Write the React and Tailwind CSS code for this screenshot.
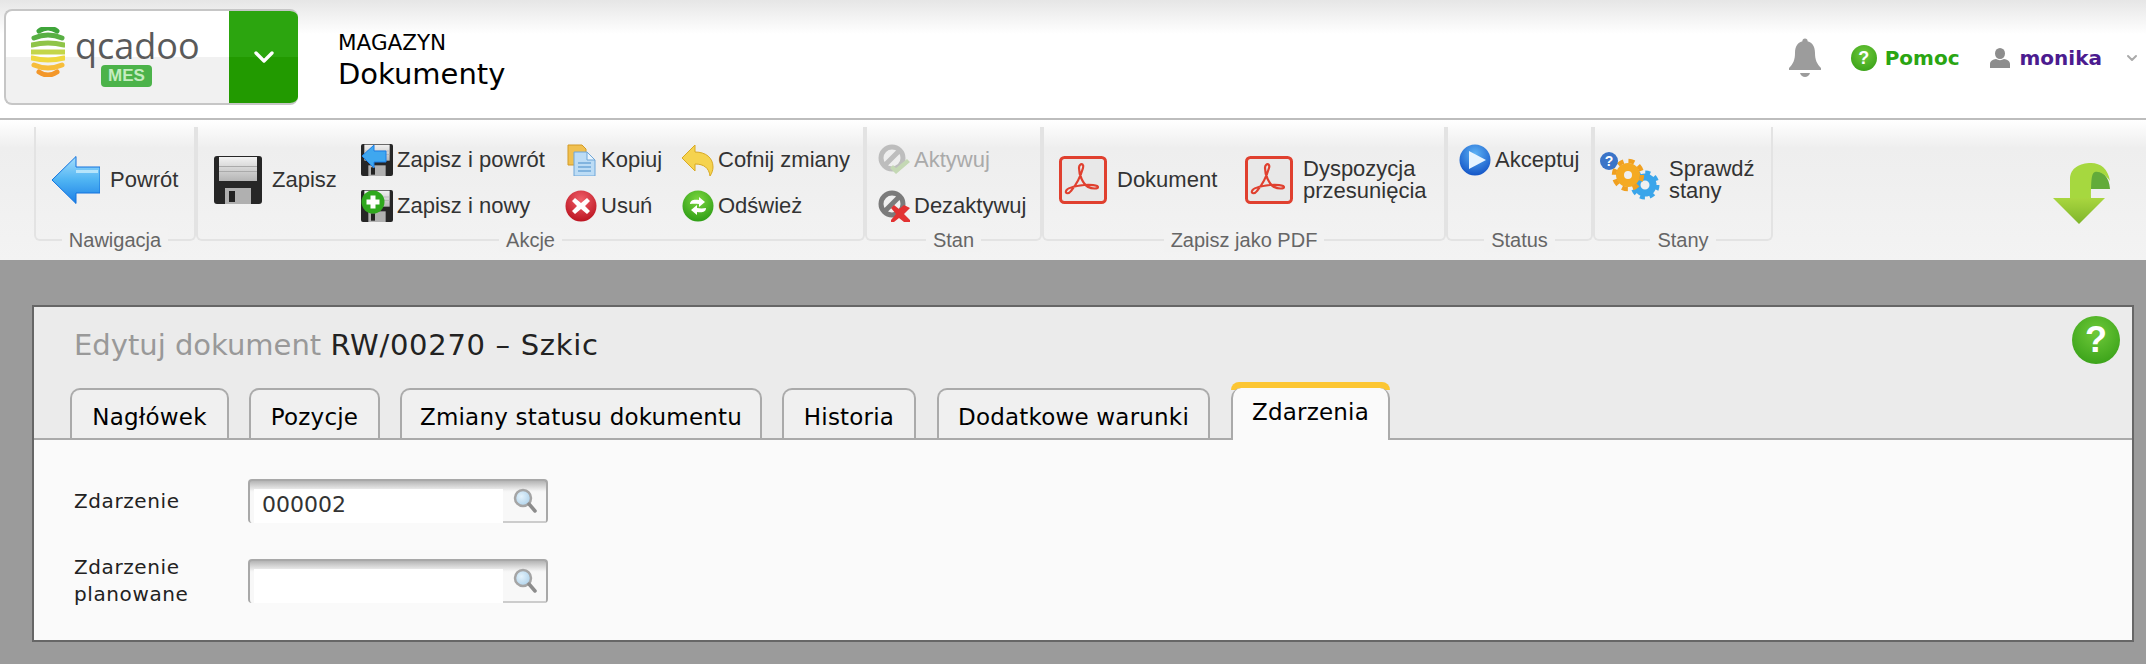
import React from 'react';
import { ChevronDown } from 'lucide-react';

const LOGO_BANDS = [
    { y: 4, bend: -3, w: 18, color: '#3fa53a' },
    { y: 11, bend: -3, w: 28, color: '#58af43' },
    { y: 18, bend: -2, w: 32, color: '#8fc448' },
    { y: 25, bend: 0, w: 33, color: '#c3d64a' },
    { y: 31, bend: 2, w: 32, color: '#efd83f' },
    { y: 38, bend: 3, w: 28, color: '#f7bd3a' },
    { y: 45, bend: 3, w: 18, color: '#f3972a' },
];

const LogoMark = () => (
    <svg width="34" height="50" viewBox="0 0 34 50">
        {LOGO_BANDS.map((b) => (
            <path
                key={b.y}
                d={`M${17 - b.w / 2} ${b.y} Q17 ${b.y + b.bend * 2} ${17 + b.w / 2} ${b.y}`}
                fill="none"
                stroke={b.color}
                strokeWidth="5"
                strokeLinecap="round"
            />
        ))}
    </svg>
);

const Bell = () => (
    <svg width="32" height="40" viewBox="0 0 32 40" fill="#9c9c9c">
        <circle cx="16" cy="3" r="2.6" />
        <path d="M16 3c-7 0-10 5-10 12 0 7-2 11-6 15v2h32v-2c-4-4-6-8-6-15 0-7-3-12-10-12z" />
        <path d="M11 35h10c-.8 2.600-2.800 4-5 4s-4.200-1.400-5-4z" />
    </svg>
);

const UserIcon = () => (
    <svg width="20" height="20" viewBox="0 0 20 20" fill="#8d8d8d">
        <ellipse cx="10" cy="5.500" rx="5" ry="5.500" />
        <path d="M0 20v-4c0-3 3-4.500 6-5 2.500 1.500 5.500 1.500 8 0 3 .5 6 2 6 5v4z" />
    </svg>
);

const ArrowBack = () => (
    <svg width="48" height="48" viewBox="0 0 48 48">
        <defs>
            <linearGradient id="arrowBack" x1="0" y1="0" x2="0" y2="1">
                <stop offset="0" stopColor="#a5defc" />
                <stop offset="0.5" stopColor="#4fb4f3" />
                <stop offset="1" stopColor="#1c7fe6" />
            </linearGradient>
        </defs>
        <path d="M0 24 24 .5v10.500h24v26H24v10.500z" fill="url(#arrowBack)" stroke="#1273de" strokeWidth="1" />
        <rect x="24" y="14" width="22" height="3" fill="#c8ecfd" opacity="0.8" />
    </svg>
);

const Floppy = ({ size = 48 }) => (
    <svg width={size} height={size} viewBox="0 0 48 48">
        <defs>
            <linearGradient id="floppyLabel" x1="0" y1="0" x2="0" y2="1">
                <stop offset="0" stopColor="#f2f2f2" />
                <stop offset="1" stopColor="#b5b5b5" />
            </linearGradient>
        </defs>
        <rect width="48" height="48" rx="3" fill="#262626" />
        <rect x="5" y="1" width="38" height="24" fill="url(#floppyLabel)" />
        <rect x="5" y="10" width="38" height="1" fill="#aaa" />
        <rect x="5" y="15" width="38" height="1" fill="#aaa" />
        <rect x="11" y="32" width="26" height="16" fill="#b0b0b0" />
        <rect x="15" y="35" width="6" height="11" fill="#222" />
    </svg>
);

const FloppyBack = () => (
    <div className="relative w-8 h-8 shrink-0 overflow-hidden">
        <Floppy size={32} />
        <svg className="absolute left-0 top-0" width="26" height="24" viewBox="0 0 26 24">
            <path d="M1 12 13 1v6h12v11H13v6z" fill="#3fa7ef" stroke="#1c7fe6" />
        </svg>
    </div>
);

const FloppyNew = () => (
    <div className="relative w-8 h-8 shrink-0 overflow-hidden">
        <Floppy size={32} />
        <svg className="absolute left-0 top-0" width="24" height="24" viewBox="0 0 24 24">
            <circle cx="12" cy="12" r="11.500" fill="#2fa81e" />
            <path d="M9.500 5.500h5v4h4v5h-4v4h-5v-4h-4v-5h4z" fill="#fff" />
        </svg>
    </div>
);

const CopyIcon = () => (
    <svg width="32" height="32" viewBox="0 0 32 32" className="shrink-0">
        <path d="M3 1h14l4 4v16H3z" fill="#f0c050" stroke="#d39a25" />
        <path d="M9 8h13l8 8v16H9z" fill="#bcdcf5" stroke="#6ea6d8" />
        <path d="M22 8v8h8z" fill="#e8f4fd" stroke="#6ea6d8" />
        <path d="M13 19h13M13 23h13M13 27h13" stroke="#6ea6d8" strokeWidth="1.500" />
    </svg>
);

const UndoIcon = () => (
    <svg width="32" height="32" viewBox="0 0 32 32" className="shrink-0">
        <path d="M0 14 13 1v7c11 0 18 6 18 15 0 3-1 6-3 9-1-8-6-12-15-12v7z" fill="#f5d34f" stroke="#d8a925" strokeLinejoin="round" />
    </svg>
);

const RedCross = () => (
    <svg width="32" height="32" viewBox="0 0 32 32" className="shrink-0">
        <defs>
            <radialGradient id="redBall" cx="0.5" cy="0.3" r="0.75">
                <stop offset="0" stopColor="#f0606a" />
                <stop offset="1" stopColor="#b80f1c" />
            </radialGradient>
        </defs>
        <circle cx="16" cy="16" r="15.500" fill="url(#redBall)" />
        <path d="M10 8l6 5 6-5 3 3-5 5 5 5-3 3-6-5-6 5-3-3 5-5-5-5z" fill="#fff" />
    </svg>
);

const RefreshIcon = () => (
    <svg width="32" height="32" viewBox="0 0 32 32" className="shrink-0">
        <defs>
            <radialGradient id="greenBall" cx="0.5" cy="0.3" r="0.75">
                <stop offset="0" stopColor="#7bd63f" />
                <stop offset="1" stopColor="#2a9a14" />
            </radialGradient>
        </defs>
        <circle cx="16" cy="16" r="15.500" fill="url(#greenBall)" />
        <path d="M8 14c0-4 4-5 9-4V7l6 5-6 5v-3c-3-.5-6-.5-9 0z" fill="#fff" />
        <path d="M24 18c0 4-4 5-9 4v3l-6-5 6-5v3c3 .5 6 .5 9 0z" fill="#fff" />
    </svg>
);

const ActivateIcon = () => (
    <svg width="32" height="32" viewBox="0 0 32 32" className="shrink-0">
        <circle cx="14" cy="14" r="11" fill="none" stroke="#bdbdbd" strokeWidth="5" />
        <path d="M6 22 22 6" stroke="#bdbdbd" strokeWidth="5" />
        <path d="M12 24l6 6 14-12-3-3-11 9-3-3z" fill="#c4d8b4" />
    </svg>
);

const DeactivateIcon = () => (
    <svg width="32" height="32" viewBox="0 0 32 32" className="shrink-0">
        <circle cx="14" cy="14" r="11" fill="none" stroke="#7b7b7b" strokeWidth="5" />
        <path d="M6 22 22 6" stroke="#7b7b7b" strokeWidth="5" />
        <path d="M13 18l3-3 5 4 5-4 6 3-6 6 6 6v2h-6l-5-4-5 4h-3v-2l5-6z" fill="#e23232" />
    </svg>
);

const PdfIcon = () => (
    <svg width="48" height="48" viewBox="0 0 48 48" className="shrink-0">
        <rect x="1.500" y="1.500" width="45" height="45" rx="4" fill="#e8e8e8" stroke="#e0402f" strokeWidth="3" />
        <path
            d="M21 9c2-2 4 0 3 3-2 7-7 17-12 23-2 3-6 3-5 0 1-3 9-5 18-6 6-.5 14 0 14 2s-6 2-10 0c-5-3-9-12-9-19 0-1 0-2 1-3z"
            fill="none"
            stroke="#e0402f"
            strokeWidth="2.200"
        />
    </svg>
);

const PlayIcon = () => (
    <svg width="32" height="32" viewBox="0 0 32 32" className="shrink-0">
        <defs>
            <radialGradient id="blueBall" cx="0.5" cy="0.3" r="0.75">
                <stop offset="0" stopColor="#5cb2f5" />
                <stop offset="1" stopColor="#0f4fc4" />
            </radialGradient>
        </defs>
        <circle cx="16" cy="16" r="15.500" fill="url(#blueBall)" />
        <path d="M10 7l17 9-17 9z" fill="#e6f4ff" />
    </svg>
);

const GearsIcon = () => (
    <svg width="60" height="48" viewBox="0 0 60 48" className="shrink-0">
        <circle cx="45" cy="33" r="8" fill="none" stroke="#3aa5ea" strokeWidth="7" />
        <circle cx="45" cy="33" r="12.500" fill="none" stroke="#3aa5ea" strokeWidth="4" strokeDasharray="5 4.800" />
        <circle cx="28" cy="23" r="8" fill="none" stroke="#f5aa22" strokeWidth="8" />
        <circle cx="28" cy="23" r="14" fill="none" stroke="#f0a020" strokeWidth="4.500" strokeDasharray="6 5" />
        <circle cx="9" cy="9" r="9" fill="#3a74c8" />
        <text x="9" y="14" textAnchor="middle" fontSize="14" fontWeight="700" fill="#fff" fontFamily="Liberation Sans, sans-serif">?</text>
    </svg>
);

const FoldArrow = () => (
    <svg width="57" height="61" viewBox="0 0 57 61">
        <defs>
            <linearGradient id="foldHead" x1="0" y1="0" x2="0" y2="1">
                <stop offset="0" stopColor="#a9d63f" />
                <stop offset="1" stopColor="#7fb52b" />
            </linearGradient>
        </defs>
        <path d="M38 8C48 6 56 12 57 26H38z" fill="#62ab3a" />
        <path d="M17 35V16C17 5 27 0 38 0 48 0 55 6 57 18 52 11 46 8 42 9 39 10 38 14 38 35z" fill="#a6d83f" />
        <path d="M0 35h52L26 61z" fill="url(#foldHead)" />
    </svg>
);

const SearchIcon = () => (
    <svg width="24" height="26" viewBox="0 0 24 26">
        <defs>
            <radialGradient id="lens" cx="0.4" cy="0.4" r="0.7">
                <stop offset="0" stopColor="#e4f2fb" />
                <stop offset="1" stopColor="#a9cfe9" />
            </radialGradient>
        </defs>
        <circle cx="10" cy="10" r="8" fill="url(#lens)" stroke="#a5a5a5" strokeWidth="2.500" />
        <path d="M16 16l6 7" stroke="#8c8c8c" strokeWidth="3.500" strokeLinecap="round" />
    </svg>
);

const HelpBall = ({ className, textClass }) => (
    <div className={`rounded-full flex items-center justify-center bg-[radial-gradient(circle_at_50%_35%,#6fc93a,#2f9a12)] text-white font-bold font-['Liberation_Sans',sans-serif] ${className}`}>
        <span className={textClass}>?</span>
    </div>
);

const Group = ({ label, className, children }) => (
    <div className={`flex flex-col justify-between h-[114px] border-x-2 border-b-2 border-[#e3e3e3] rounded-b-md ${className}`}>
        <div className="flex pt-[17px]">{children}</div>
        <div className="flex justify-center -mb-[13px]">
            <span className="bg-[#f2f2f2] px-[7px] text-[20px] leading-6 text-[#666]">{label}</span>
        </div>
    </div>
);

const SmallBtn = ({ icon, label, disabled }) => (
    <div className={`flex items-center gap-1 h-8 whitespace-nowrap ${disabled ? 'text-[#aaa]' : 'text-[#333]'}`}>
        {icon}
        <span>{label}</span>
    </div>
);

const Tab = ({ label, active, className }) =>
    active ? (
        <div className={`flex flex-col h-[58px] -mb-[2px] ${className}`}>
            <div className="h-[8px] -mb-[2px] rounded-t-[10px] bg-[#fcc633]" />
            <div className="flex-1 flex justify-center pt-[8px] rounded-t-[10px] border-x-2 border-[#aaa] bg-[#fafafa] text-[23px] tracking-[0.2px] leading-8 text-black">
                {label}
            </div>
        </div>
    ) : (
        <div className={`flex justify-center items-center h-[50px] pt-[6px] rounded-t-[10px] border-x-2 border-t-2 border-[#aaa] bg-[#f0f0f0] text-[23px] tracking-[0.2px] text-black ${className}`}>
            {label}
        </div>
    );

const LookupField = ({ label, value }) => (
    <div className="flex items-center">
        <div className="w-[174px] text-[20px] leading-[27px] tracking-[0.6px] text-[#222]">{label}</div>
        <div className="flex w-[300px] h-11 rounded border-2 border-b-0 border-[#a8a8a8] bg-[linear-gradient(#b5b5b5,#f5f5f5_10px,#f8f8f8_12px)]">
            <div className="flex-1 mt-[8px] ml-[4px] bg-[#fff]">
                <input
                    readOnly
                    value={value}
                    className="w-full h-full pl-[8px] pb-[3px] text-[22px] text-[#333] font-['DejaVu_Sans',sans-serif] outline-none bg-transparent"
                />
            </div>
            <div className="w-[43px] flex items-center justify-center border-b-2 border-[#ccc]">
                <SearchIcon />
            </div>
        </div>
    </div>
);

export default function App() {
    return (
        <div className="h-[664px] w-full overflow-hidden bg-[#9b9b9b] font-['DejaVu_Sans',sans-serif]">
            {/* header */}
            <header className="flex items-center h-[120px] pb-[2px] pl-1 pr-[6px] border-b-2 border-[#bdbdbd] bg-[linear-gradient(#e6e6e6,#ffffff_34px)]">
                <div className="flex w-[294px] h-[96px] -mt-[2px] rounded-lg overflow-hidden border-2 border-r-0 border-[#c6c6c6] bg-[linear-gradient(#ffffff_50%,#f1f1f1_50%)]">
                    <div className="flex-1 flex pl-[25px] pt-[16px] gap-[10px]">
                        <LogoMark />
                        <div className="flex flex-col">
                            <span className="font-['Open_Sans',sans-serif] text-[36px] leading-[38px] text-[#5a5a5a]">qcadoo</span>
                            <span className="self-start ml-[26px] px-[7px] h-[22px] rounded-sm bg-[#4cb34a] text-[#c5ecc0] text-[17px] leading-[22px] font-bold font-['Liberation_Sans',sans-serif]">MES</span>
                        </div>
                    </div>
                    <div className="w-[69px] flex items-center justify-center bg-[linear-gradient(#2ca50f_50%,#229a00_50%)]">
                        <ChevronDown className="w-8 h-8 text-white" strokeWidth={2.500} />
                    </div>
                </div>
                <div className="ml-[40px] mt-[6px] text-black">
                    <div className="text-[21.5px] leading-[26px]">MAGAZYN</div>
                    <div className="text-[29px] leading-[36px]">Dokumenty</div>
                </div>
                <div className="ml-auto flex items-center">
                    <Bell />
                    <HelpBall className="ml-[30px] w-[26px] h-[26px]" textClass="text-[18px]" />
                    <span className="ml-2 text-[20px] font-bold text-[#2aa512]">Pomoc</span>
                    <div className="ml-[30px]"><UserIcon /></div>
                    <span className="ml-[10px] text-[20px] font-bold text-[#4b1b8f]">monika</span>
                    <ChevronDown className="ml-[22px] w-4 h-4 text-[#aaa]" strokeWidth={3} />
                </div>
            </header>

            {/* toolbar */}
            <div className="flex h-[140px] pt-[7px] pl-[34px] bg-[linear-gradient(#ffffff,#eeeeee_28px,#f3f3f3)] text-[22px] leading-6 text-[#333] font-['Liberation_Sans',Arial,sans-serif]">
                <Group label="Nawigacja" className="w-[162px]">
                    <div className="flex items-center gap-[10px] h-12 mt-[12px] ml-[16px]">
                        <ArrowBack />
                        <span>Powrót</span>
                    </div>
                </Group>
                <Group label="Akcje" className="w-[669px]">
                    <div className="flex items-center gap-[10px] w-[147px] h-12 mt-[12px] ml-[16px]">
                        <Floppy />
                        <span>Zapisz</span>
                    </div>
                    <div className="flex flex-col gap-[14px] w-[204px]">
                        <SmallBtn icon={<FloppyBack />} label="Zapisz i powrót" />
                        <SmallBtn icon={<FloppyNew />} label="Zapisz i nowy" />
                    </div>
                    <div className="flex flex-col gap-[14px] w-[117px]">
                        <SmallBtn icon={<CopyIcon />} label="Kopiuj" />
                        <SmallBtn icon={<RedCross />} label="Usuń" />
                    </div>
                    <div className="flex flex-col gap-[14px]">
                        <SmallBtn icon={<UndoIcon />} label="Cofnij zmiany" />
                        <SmallBtn icon={<RefreshIcon />} label="Odśwież" />
                    </div>
                </Group>
                <Group label="Stan" className="w-[177px]">
                    <div className="flex flex-col gap-[14px] ml-[11px]">
                        <SmallBtn icon={<ActivateIcon />} label="Aktywuj" disabled />
                        <SmallBtn icon={<DeactivateIcon />} label="Dezaktywuj" />
                    </div>
                </Group>
                <Group label="Zapisz jako PDF" className="w-[404px]">
                    <div className="flex items-center gap-[10px] w-[186px] h-12 mt-[12px] ml-[15px]">
                        <PdfIcon />
                        <span>Dokument</span>
                    </div>
                    <div className="flex items-center gap-[10px] h-12 mt-[12px]">
                        <PdfIcon />
                        <span className="leading-[22px]">Dyspozycja<br />przesunięcia</span>
                    </div>
                </Group>
                <Group label="Status" className="w-[147px]">
                    <div className="ml-[11px]">
                        <SmallBtn icon={<PlayIcon />} label="Akceptuj" />
                    </div>
                </Group>
                <Group label="Stany" className="w-[180px]">
                    <div className="flex items-center gap-[9px] h-12 mt-[8px] ml-[5px]">
                        <GearsIcon />
                        <span className="mt-2 leading-[22px]">Sprawdź<br />stany</span>
                    </div>
                </Group>
                <div className="ml-[280px] mt-[36px]">
                    <FoldArrow />
                </div>
            </div>

            {/* form panel */}
            <main className="mt-[45px] ml-[32px] w-[2102px] h-[337px] border-2 border-[#666] bg-[#fafafa]">
                <div className="h-[133px] border-b-2 border-[#aaa] bg-[#ebebeb] flex flex-col justify-between">
                    <div className="flex items-start justify-between pl-[40px] pr-[12px] pt-[9px]">
                        <h1 className="pt-[11px] text-[29px] leading-9 text-[#999]">
                            Edytuj dokument <span className="tracking-[0.7px] text-[#222]">RW/00270 – Szkic</span>
                        </h1>
                        <HelpBall className="w-12 h-12" textClass="text-[36px]" />
                    </div>
                    <div className="flex pl-[36px] h-[50px]">
                        <Tab label="Nagłówek" className="w-[159px]" />
                        <Tab label="Pozycje" className="ml-[20px] w-[131px]" />
                        <Tab label="Zmiany statusu dokumentu" className="ml-[20px] w-[362px]" />
                        <Tab label="Historia" className="ml-[20px] w-[134px]" />
                        <Tab label="Dodatkowe warunki" className="ml-[21px] w-[273px]" />
                        <div className="ml-[21px] w-[159px] -mt-[6px] flex flex-col">
                            <Tab label="Zdarzenia" active className="w-full" />
                        </div>
                    </div>
                </div>
                <div className="flex flex-col gap-[31px] pl-[40px] pt-[39px]">
                    <LookupField label="Zdarzenie" value="000002" />
                    <LookupField label={<>Zdarzenie<br />planowane</>} value="" />
                </div>
            </main>
        </div>
    );
}
